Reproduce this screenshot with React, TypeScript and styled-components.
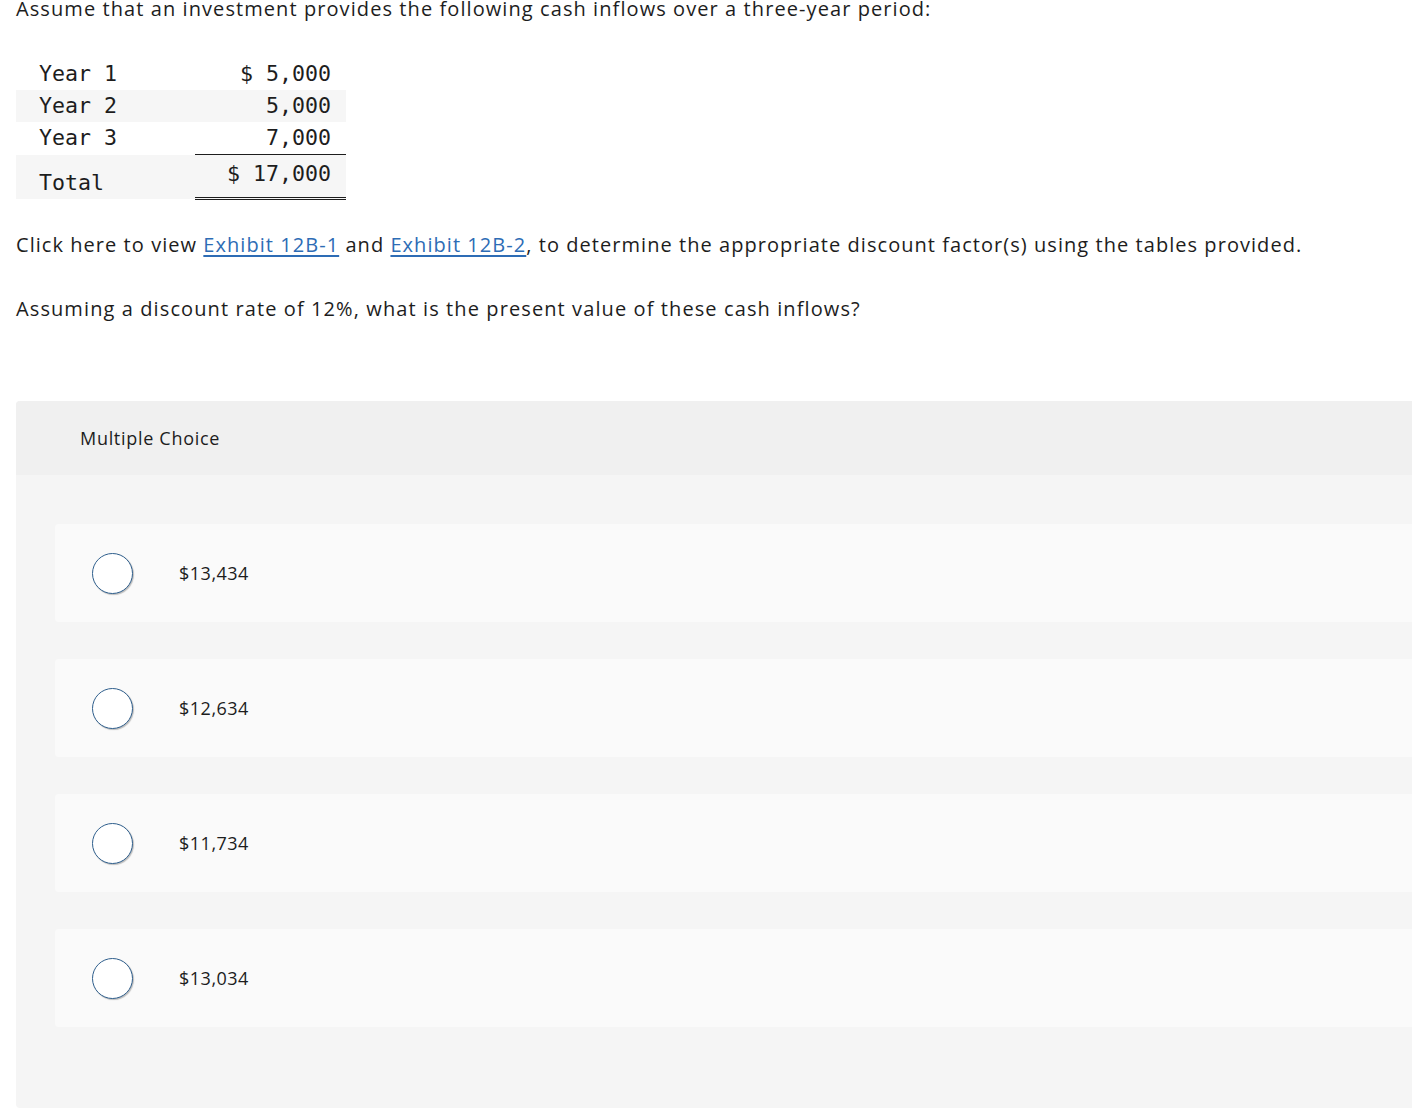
import styled, { createGlobalStyle } from "styled-components";

const GlobalStyle = createGlobalStyle`
  html, body {
    margin: 0;
    padding: 0;
    background: #ffffff;
    overflow: hidden;
  }
  body {
    font-family: "Open Sans", "Lato", sans-serif;
    color: #1d1d1d;
  }
`;

type Row = { label: string; amount: string; shaded?: boolean; ruled?: boolean };

const rows: Row[] = [
  { label: "Year 1", amount: "$ 5,000" },
  { label: "Year 2", amount: "5,000", shaded: true },
  { label: "Year 3", amount: "7,000", ruled: true },
];

const choices = ["$13,434", "$12,634", "$11,734", "$13,034"];

export default function App() {
  return (
    <>
      <GlobalStyle />
      <Page>
        <Text>
          Assume that an investment provides the following cash inflows over a
          three-year period:
        </Text>

        <CashTable>
          <tbody>
            {rows.map((row) => (
              <tr key={row.label}>
                <LabelCell $shaded={row.shaded}>{row.label}</LabelCell>
                <AmountCell $shaded={row.shaded} $ruled={row.ruled}>
                  {row.amount}
                </AmountCell>
              </tr>
            ))}
            <tr>
              <TotalLabel>Total</TotalLabel>
              <TotalAmount>$ 17,000</TotalAmount>
            </tr>
          </tbody>
        </CashTable>

        <Prompt>
          Click here to view <Link href="#">Exhibit 12B-1</Link> and{" "}
          <Link href="#">Exhibit 12B-2</Link>, to determine the appropriate
          discount factor(s) using the tables provided.
        </Prompt>

        <Question>
          Assuming a discount rate of 12%, what is the present value of these
          cash inflows?
        </Question>

        <ChoicePanel>
          <PanelHeader>Multiple Choice</PanelHeader>
          <ChoiceList>
            {choices.map((c) => (
              <Choice key={c}>
                <Radio />
                <ChoiceText>{c}</ChoiceText>
              </Choice>
            ))}
          </ChoiceList>
        </ChoicePanel>
      </Page>
    </>
  );
}

const Page = styled.div`
  padding: 0 0 0 16px;
  margin-top: -4px;
`;

const Text = styled.p`
  margin: 0;
  font-size: 20px;
  line-height: 26px;
  letter-spacing: 1.08px;
`;

const CashTable = styled.table`
  border-collapse: collapse;
  margin-top: 36px;
  font-family: "DejaVu Sans Mono", "Liberation Mono", monospace;
  font-size: 21.6px;
  line-height: 32px;
  color: #1d1d1d;
`;

const LabelCell = styled.td<{ $shaded?: boolean }>`
  width: 179px;
  height: 32px;
  padding: 0 0 0 23px;
  box-sizing: border-box;
  background: ${({ $shaded }) => ($shaded ? "#f6f6f6" : "transparent")};
  white-space: pre;
`;

const AmountCell = styled.td<{ $shaded?: boolean; $ruled?: boolean }>`
  width: 151px;
  height: 32px;
  padding: 0 15px 0 0;
  box-sizing: border-box;
  text-align: right;
  background: ${({ $shaded }) => ($shaded ? "#f6f6f6" : "transparent")};
  border-bottom: ${({ $ruled }) => ($ruled ? "1px solid #1d1d1d" : "none")};
  white-space: pre;
`;

const TotalLabel = styled.td`
  height: 42px;
  padding: 12px 0 0 23px;
  vertical-align: top;
  box-sizing: border-box;
  background: #f6f6f6;
`;

const TotalAmount = styled.td`
  height: 42px;
  padding: 3px 15px 0 0;
  vertical-align: top;
  box-sizing: border-box;
  text-align: right;
  background: #f6f6f6;
  border-bottom: 3px double #1d1d1d;
  white-space: pre;
`;

const Prompt = styled.p`
  margin: 32px 0 0;
  font-size: 20px;
  line-height: 26px;
  letter-spacing: 1.05px;
`;

const Question = styled.p`
  margin: 38px 0 0;
  font-size: 20px;
  line-height: 26px;
  letter-spacing: 1.1px;
`;

const Link = styled.a`
  color: #2d6cb5;
  text-decoration: underline;
  text-underline-offset: 3px;
`;

const ChoicePanel = styled.section`
  margin-top: 79px;
  width: calc(100% + 40px);
  background: #f5f5f5;
  border-radius: 4px;
  overflow: hidden;
  padding-bottom: 81px;
`;

const PanelHeader = styled.div`
  height: 74px;
  display: flex;
  align-items: center;
  padding-left: 64px;
  background: #f0f0f0;
  font-size: 18px;
  letter-spacing: 0.7px;
  color: #1d1d1d;
`;

const ChoiceList = styled.div`
  display: flex;
  flex-direction: column;
  gap: 37px;
  padding: 49px 0 0 39px;
`;

const Choice = styled.div`
  height: 98px;
  display: flex;
  align-items: center;
  padding-left: 37px;
  background: #fafafa;
  border-radius: 4px 0 0 4px;
`;

const Radio = styled.span`
  width: 39px;
  height: 39px;
  border-radius: 50%;
  border: 1.5px solid #2f5f8d;
  background: #ffffff;
  box-shadow: 1px 1px 1px rgba(0, 0, 0, 0.25);
  flex-shrink: 0;
`;

const ChoiceText = styled.span`
  margin-left: 46px;
  font-size: 18px;
  letter-spacing: 0.5px;
  color: #1d1d1d;
`;
